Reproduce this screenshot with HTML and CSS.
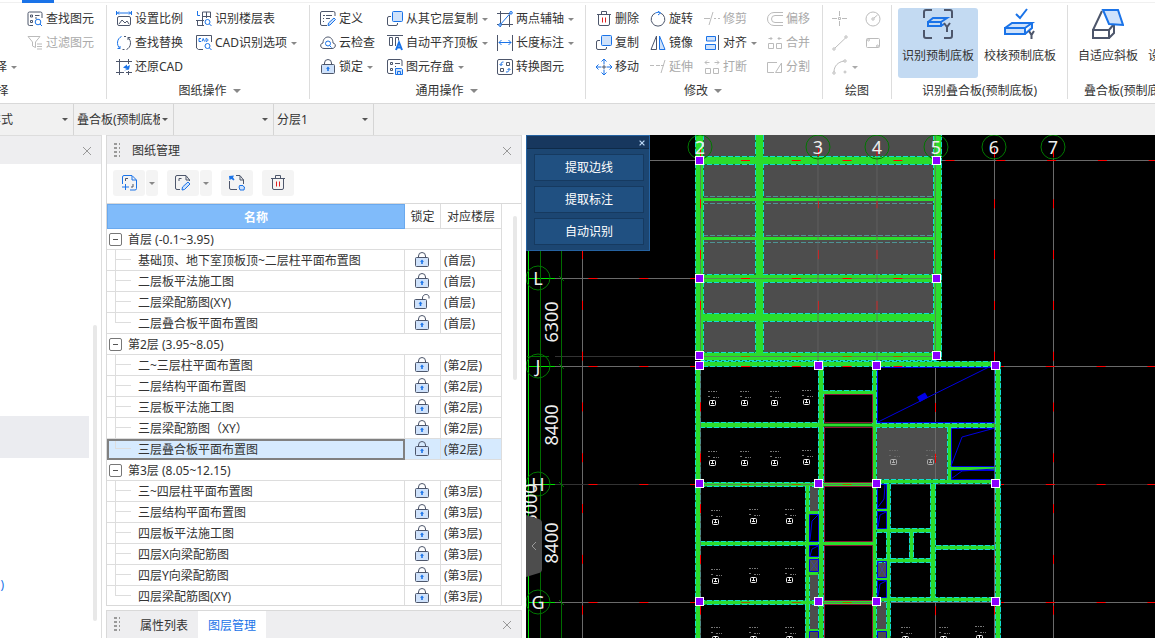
FILE: index.html
```html
<!DOCTYPE html>
<html lang="zh-CN">
<head>
    <meta charset="UTF-8">
    <meta name="viewport" content="width=device-width, initial-scale=1.0">
    <title>图纸管理</title>
    <link rel="stylesheet" href="styles.css">
</head>
<body>
    <!-- icon set -->
    <svg class="sprite" aria-hidden="true">
        <symbol id="i-find" viewBox="0 0 16 16"><path class="d" d="M6 14.500H2.500a1.500 1.500 0 0 1-1.500-1.500V2.500A1.500 1.500 0 0 1 2.500 1h11A1.500 1.500 0 0 1 15 2.500V7M3.500 4h2v2h-2zM3.500 9.500h2v2h-2zM8 4.500h4.500M8 7h2"/><circle class="b" cx="11" cy="11" r="2.800"/><path class="b" d="M13 13l2 2"/></symbol>
        <symbol id="i-filter" viewBox="0 0 16 16"><path class="d" d="M1 1.500h12L8.500 7v5.500l-3-1.500V7zM10 9h5M10 11.500h5M10 14h5"/></symbol>
        <symbol id="i-scale" viewBox="0 0 16 16"><path class="b" d="M.5 0v4M15.500 0v4M1 2h14M3 .5L1.500 2 3 3.500M13 .5L14.500 2 13 3.500"/><rect class="d" x="1.500" y="5.500" width="13" height="9" rx="1.500"/><path class="d" d="M3 13l3-4 3 3 2-2 2 3"/></symbol>
        <symbol id="i-replace" viewBox="0 0 16 16"><path class="b" d="M5.500 1.500C1 3.500 0 10 4 13.500M1.500 13.500H4V11"/><path class="d" d="M6.500 14.500h2M10.500 14.500c4.500-2 5.500-8.500 1.500-12M14.500 2.500H12V5M8 1.500h2"/></symbol>
        <symbol id="i-restore" viewBox="0 0 16 16"><path class="d" d="M0 2.500h16M3.500 0v16M12.500 0v5M0 13.500h8M12.500 12v4M10 13.500h6"/><path class="bf" d="M7 8.500l4-3v2l3-1.500-1 4.500-5 1 3-1.500z"/></symbol>
        <symbol id="i-floors" viewBox="0 0 16 16"><path class="b" d="M1.500 0v4.500H4"/><path class="d" d="M6.500 1h8v6M6.500 1v13.500M6 5.500h9M10.500 1v6M0 9.500h8M1.500 9.500v5H8"/><circle class="b" cx="11.500" cy="11" r="2.500"/><path class="b" d="M13.500 13l2 2"/></symbol>
        <symbol id="i-cadopt" viewBox="0 0 16 16"><path class="d" d="M7 14.500H2.500L.5 13V.5h15V7"/><path class="b" d="M5 3.500H3v3h2M6 6.500l1.200-3 1.300 3M10 3.500v3c2.500 0 2.500-3 0-3"/><circle class="b" cx="11.500" cy="11" r="2.500"/><path class="b" d="M13.500 13l2 2"/></symbol>
        <symbol id="i-define" viewBox="0 0 16 16"><path class="d" d="M7 14.500H2A1.500 1.500 0 0 1 .5 13V2A1.500 1.500 0 0 1 2 .5h11.500A1.500 1.500 0 0 1 15 2v3M3 4.500h2M6 4.500h6M3 7.500h1M6 7.500h4M3 10.500h1"/><path class="bl" d="M8 14.500l.5-2.500L14 7l1.500 1.500L10 14z"/></symbol>
        <symbol id="i-cloud" viewBox="0 0 16 16"><path class="d" d="M4 13.500C0 13.500-.5 8.500 3 8 3 0 13 0 13 8c3.500.5 3 5.500-1 5.500z"/><circle class="b" cx="8" cy="8.500" r="2.500"/><path class="b" d="M9.500 10.500l2 2"/></symbol>
        <symbol id="i-lock" viewBox="0 0 16 16"><path class="d" d="M4.500 6V4a3.500 3.500 0 0 1 7 0v2"/><rect class="dl" x="1.500" y="5.500" width="13" height="9" rx="1"/><path class="bf" d="M8 7.500l2 2.200H8.800V12H7.200V9.700H6z"/></symbol>
        <symbol id="i-unlock" viewBox="0 0 16 16"><path class="d" d="M8.500 6V4c0-4.500 6.500-4.500 6.500-1v1.500"/><rect class="dl" x=".5" y="5.500" width="12" height="9" rx="1"/><path class="bf" d="M6.500 7.500l2 2.200H7.300V12H5.700V9.700H4.500z"/></symbol>
        <symbol id="i-copy" viewBox="0 0 16 16"><path class="d" d="M4 5.500H2A1.500 1.500 0 0 0 .5 7v6A1.500 1.500 0 0 0 2 14.500h7a1.500 1.500 0 0 0 1.500-1.500v-1"/><rect class="bl" x="5.500" y=".5" width="10" height="10" rx="1"/></symbol>
        <symbol id="i-flush" viewBox="0 0 16 16"><path class="d" d="M0 .5h16M2.500 2.500h3v8h-3zM8.500 11V2.500h3v3"/><path class="b thick" d="M9 15l3-7.500L15 15M10 12.500h4"/></symbol>
        <symbol id="i-save" viewBox="0 0 16 16"><path class="d" d="M6.500 14.500H2A1.500 1.500 0 0 1 .5 13V2A1.500 1.500 0 0 1 2 .5h11.500A1.500 1.500 0 0 1 15 2v5M3.500 3.500h2v2h-2zM3.500 9.500h2v2h-2zM8 4.500h5M8 7.500h1"/><path class="bl" d="M8.500 9.500h6l1 1v5h-7zM10.500 15v-2.500h3V15"/></symbol>
        <symbol id="i-axis" viewBox="0 0 16 16"><path class="d" d="M0 2.500h13M3.500 0v16M12.500 4v12M0 13.500h16"/><path class="b" d="M3 14L13.500 2"/><circle class="bl" cx="14" cy="1.800" r="1.300"/><circle class="bl" cx="3" cy="14" r="1.300"/></symbol>
        <symbol id="i-length" viewBox="0 0 16 16"><path class="d" d="M.5 0v16M15.500 0v16"/><path class="b" d="M2 7.500h12M4.500 5L2 7.500 4.500 10M11.500 5L14 7.500 11.500 10"/></symbol>
        <symbol id="i-convert" viewBox="0 0 16 16"><rect class="d" x=".5" y=".5" width="15" height="15" rx="1.500"/><path class="d" d="M9.500 3.500h3v3h-3zM3.500 9.500h3v3h-3z"/><path class="b" d="M6.500 3C4 3 4 4 4 6.500M2.500 5L4 6.500 5.500 5M9 13c3 0 3-1 3-3.500M10.500 11L12 9.500l1.500 1.500"/></symbol>
        <symbol id="i-trash" viewBox="0 0 16 16"><path class="d" d="M1 3.500h14M5.500 3V.5h5V3M2.500 3.500V13A1.500 1.500 0 0 0 4 14.500h8a1.500 1.500 0 0 0 1.500-1.500V3.500"/><path class="r" d="M6.500 6.500v5M9.500 6.500v5"/></symbol>
        <symbol id="i-rotate" viewBox="0 0 16 16"><path class="d" d="M10.500 2A6.800 6.800 0 1 1 5.500 2"/><path class="b" d="M5.500 2c2-1 3.500-.8 5 0M8 0l2.500 2L8 4"/></symbol>
        <symbol id="i-trim" viewBox="0 0 16 16"><path class="d" d="M0 7.500h6M10 7.500h2M14 7.500h2M5 14l4-13"/></symbol>
        <symbol id="i-offset" viewBox="0 0 16 16"><path class="d" d="M16 1.500H7a6.500 6.500 0 0 0 0 13h9M16 4.500H8a3 3 0 0 0 0 7h8"/></symbol>
        <symbol id="i-mirror" viewBox="0 0 16 16"><path class="d" d="M6.500 1v13.500H1z"/><path class="bl" d="M9.500 1v13.500H15z"/></symbol>
        <symbol id="i-align" viewBox="0 0 16 16"><path class="d" d="M14.500 0v15"/><path class="bl" d="M2.500 1.500h9V6h-9zM1.500 9.500h10v5h-10z"/></symbol>
        <symbol id="i-merge" viewBox="0 0 16 16"><path class="d" d="M1.500 8.500h5v5h-5zM9.500 8.500h5v5h-5zM1.500 3.500H5M3.500 2L5 3.500 3.500 5M14.500 3.500H11M12.500 2L11 3.500 12.500 5"/></symbol>
        <symbol id="i-move" viewBox="0 0 16 16"><path class="b" d="M5.500 2.500L8 0l2.500 2.500M5.500 13.500L8 16l2.500-2.500M2.500 5.500L0 8l2.500 2.500M13.500 5.500L16 8l-2.500 2.500M8 .5v5M8 10.500v5M.5 8h5M10.500 8h5"/><path class="d" d="M8 6v4M6 8h4"/></symbol>
        <symbol id="i-extend" viewBox="0 0 16 16"><path class="d" d="M0 6.500h4M6 6.500h4M11 6.500h3M11 14l4-13"/></symbol>
        <symbol id="i-break" viewBox="0 0 16 16"><path class="d" d="M1.500 9.500h5v5h-5zM9.500 9.500h5v5h-5zM5.500 3.500H1M3 1.500l-2 2 2 2M10.500 3.500H15M13 1.500l2 2-2 2"/></symbol>
        <symbol id="i-split" viewBox="0 0 16 16"><path class="d" d="M10 3.500H.5v10H7M14.500 4l-6 9.500h6z"/></symbol>
        <symbol id="i-point" viewBox="0 0 16 16"><path class="d" d="M0 7.500h5M10 7.500h5M7.500 0v5M7.500 10v5M6.500 6.500h2v2h-2z"/></symbol>
        <symbol id="i-circle" viewBox="0 0 16 16"><circle class="d" cx="8" cy="8" r="7"/><circle class="d" cx="8" cy="8" r="1.200"/><path class="d" d="M9 7l3.500-3"/></symbol>
        <symbol id="i-line" viewBox="0 0 16 16"><path class="d" d="M3 13L13.500 3"/><circle class="d" cx="2" cy="14" r="1.200"/><circle class="d" cx="14" cy="2" r="1.200"/></symbol>
        <symbol id="i-rect" viewBox="0 0 16 16"><rect class="d" x="1.500" y="3.500" width="13" height="9" rx="1"/><circle class="d" cx="3.500" cy="5" r="1"/><circle class="d" cx="12.500" cy="11" r="1"/></symbol>
        <symbol id="i-arc" viewBox="0 0 16 16"><path class="d" d="M2 13C2 7 6 3 12 2"/><circle class="d" cx="2" cy="14" r="1.200"/><circle class="d" cx="13" cy="2" r="1.200"/><circle class="d" cx="13" cy="13" r="1"/></symbol>
        <symbol id="i-recog" viewBox="0 0 32 32"><path class="d thick" d="M2 10V4a2 2 0 0 1 2-2h6M22 2h6a2 2 0 0 1 2 2v6M2 22v6a2 2 0 0 0 2 2h6M22 30h6a2 2 0 0 0 2-2v-6"/><path class="b thick" d="M6 14h13v4H6zM6 14l5-4h14l-6 4M19 18l3-2"/><path class="d thick" d="M22 15l3 4 3-4M25 19v5"/></symbol>
        <symbol id="i-check" viewBox="0 0 32 32"><path class="b thick" d="M12 6l4 4 7-9"/><path class="bl thick" d="M1 20h20v6H1zM1 20l7-5h20l-7 5M28 15v5l-7 6"/><path class="d thick" d="M25 23l2.500 4 2.500-4M27.500 27v4"/></symbol>
        <symbol id="i-slope" viewBox="0 0 32 32"><path class="d thick" d="M1 22h16v8H1zM1 22L10 3M17 22l5-6M17 30l5-5v-8"/><path class="bl thick" d="M11 2h15l5 15-14-1z"/></symbol>
        <symbol id="i-newdwg" viewBox="0 0 16 16"><path class="b" d="M1.500 9V2A1.500 1.500 0 0 1 3 .5h8L15.500 5v8.500A1.500 1.500 0 0 1 14 15H9M11 1v4h4M4.500 9v6M1 12h7"/><path class="d" d="M4.500 6V3.500H7M12 9v3h-2"/></symbol>
        <symbol id="i-editdwg" viewBox="0 0 16 16"><path class="d" d="M5 14.500H2A1.500 1.500 0 0 1 .5 13V2A1.500 1.500 0 0 1 2 .5h9L14.500 5v1M11 1v4h4M4 6V3.500h2.500"/><path class="bl" d="M7 15l.5-3L13 7l2 2-5.500 5.500z"/></symbol>
        <symbol id="i-locate" viewBox="0 0 16 16"><path class="d" d="M.5 6v7A1.500 1.500 0 0 0 2 14.500h6M7 .5h4L14.500 5v4M11 1v4h4"/><path class="bf" d="M0 1l5-.5-1 2 1.500 2-1 1-2-1.500-2 1z"/><path class="bl" d="M10 12l1-2 1 1 1-1 1 1 1.500 1-.5 3h-4z"/></symbol>
        <symbol id="i-close" viewBox="0 0 10 10"><path d="M1 1l8 8M9 1L1 9"/></symbol>
    </svg>

    <div class="app">
        <nav class="tabstrip"><span class="tab-mark"></span></nav>

        <div class="ribbon">
            <section class="group g-select">
                <div class="tools">
                    <span></span>
                    <button class="tool"><svg><use href="#i-find"/></svg>查找图元</button>
                    <span></span>
                    <button class="tool" disabled><svg><use href="#i-filter"/></svg>过滤图元</button>
                    <button class="tool cut">择<i class="caret"></i></button>
                </div>
                <div class="title cut">择</div>
            </section>
            <section class="group g-drawing">
                <div class="tools">
                    <button class="tool"><svg><use href="#i-scale"/></svg>设置比例</button>
                    <button class="tool"><svg><use href="#i-floors"/></svg>识别楼层表</button>
                    <button class="tool"><svg><use href="#i-replace"/></svg>查找替换</button>
                    <button class="tool"><svg><use href="#i-cadopt"/></svg>CAD识别选项<i class="caret"></i></button>
                    <button class="tool"><svg><use href="#i-restore"/></svg>还原CAD</button>
                </div>
                <button class="title">图纸操作<i class="caret big"></i></button>
            </section>
            <section class="group g-common">
                <div class="tools">
                    <button class="tool"><svg><use href="#i-define"/></svg>定义</button>
                    <button class="tool"><svg><use href="#i-copy"/></svg>从其它层复制<i class="caret"></i></button>
                    <button class="tool"><svg><use href="#i-axis"/></svg>两点辅轴<i class="caret"></i></button>
                    <button class="tool"><svg><use href="#i-cloud"/></svg>云检查</button>
                    <button class="tool"><svg><use href="#i-flush"/></svg>自动平齐顶板<i class="caret"></i></button>
                    <button class="tool"><svg><use href="#i-length"/></svg>长度标注<i class="caret"></i></button>
                    <button class="tool"><svg><use href="#i-lock"/></svg>锁定<i class="caret"></i></button>
                    <button class="tool"><svg><use href="#i-save"/></svg>图元存盘<i class="caret"></i></button>
                    <button class="tool"><svg><use href="#i-convert"/></svg>转换图元</button>
                </div>
                <button class="title">通用操作<i class="caret big"></i></button>
            </section>
            <section class="group g-modify">
                <div class="tools">
                    <button class="tool"><svg><use href="#i-trash"/></svg>删除</button>
                    <button class="tool"><svg><use href="#i-rotate"/></svg>旋转</button>
                    <button class="tool" disabled><svg><use href="#i-trim"/></svg>修剪</button>
                    <button class="tool" disabled><svg><use href="#i-offset"/></svg>偏移</button>
                    <button class="tool"><svg><use href="#i-copy"/></svg>复制</button>
                    <button class="tool"><svg><use href="#i-mirror"/></svg>镜像</button>
                    <button class="tool"><svg><use href="#i-align"/></svg>对齐<i class="caret"></i></button>
                    <button class="tool" disabled><svg><use href="#i-merge"/></svg>合并</button>
                    <button class="tool"><svg><use href="#i-move"/></svg>移动</button>
                    <button class="tool" disabled><svg><use href="#i-extend"/></svg>延伸</button>
                    <button class="tool" disabled><svg><use href="#i-break"/></svg>打断</button>
                    <button class="tool" disabled><svg><use href="#i-split"/></svg>分割</button>
                </div>
                <button class="title">修改<i class="caret big"></i></button>
            </section>
            <section class="group g-draw">
                <div class="tools">
                    <button class="tool" disabled aria-label="点"><svg><use href="#i-point"/></svg></button>
                    <button class="tool" disabled aria-label="圆"><svg><use href="#i-circle"/></svg></button>
                    <button class="tool" disabled aria-label="直线"><svg><use href="#i-line"/></svg></button>
                    <button class="tool" disabled aria-label="矩形"><svg><use href="#i-rect"/></svg></button>
                    <button class="tool" disabled aria-label="弧"><svg><use href="#i-arc"/></svg><i class="caret"></i></button>
                </div>
                <div class="title">绘图</div>
            </section>
            <section class="group g-recog">
                <div class="big-tools">
                    <button class="big-tool active"><svg><use href="#i-recog"/></svg>识别预制底板</button>
                    <button class="big-tool"><svg><use href="#i-check"/></svg>校核预制底板</button>
                </div>
                <div class="title">识别叠合板(预制底板)</div>
            </section>
            <section class="group g-slab">
                <div class="big-tools">
                    <button class="big-tool"><svg><use href="#i-slope"/></svg>自适应斜板</button>
                    <button class="big-tool next"><svg></svg>设</button>
                </div>
                <div class="title">叠合板(预制底板)</div>
            </section>
        </div>

        <div class="options">
            <label class="combo first"><select aria-label="样式"><option>样式</option></select></label>
            <label class="combo"><select aria-label="构件类型"><option>叠合板(预制底板)</option></select></label>
            <label class="combo"><select aria-label="构件"><option></option></select></label>
            <label class="combo"><select aria-label="分层"><option>分层1</option></select></label>
        </div>

        <main class="workspace">
            <aside class="nav-panel">
                <header class="panel-head"><button class="close" aria-label="关闭"><svg><use href="#i-close"/></svg></button></header>
                <div class="nav-body">
                    <div class="nav-list">
                        <div class="nav-selected"></div>
                        <a href="#" class="nav-link">)</a>
                    </div>
                    <div class="nav-scroll"></div>
                </div>
            </aside>

            <aside class="dock">
                <section class="sheet-panel">
                    <header class="panel-head"><i class="grip"></i><h2>图纸管理</h2><button class="close" aria-label="关闭"><svg><use href="#i-close"/></svg></button></header>
                    <div class="sheet-tools">
                        <button aria-label="添加图纸"><svg><use href="#i-newdwg"/></svg></button><button class="drop" aria-label="更多"><i class="caret"></i></button>
                        <button aria-label="编辑图纸"><svg><use href="#i-editdwg"/></svg></button><button class="drop" aria-label="更多"><i class="caret"></i></button>
                        <button class="single" aria-label="定位图纸"><svg><use href="#i-locate"/></svg></button>
                        <button aria-label="删除图纸"><svg><use href="#i-trash"/></svg></button>
                    </div>
                    <div class="sheet-list">
                        <table>
                            <colgroup><col><col class="c-lock"><col class="c-floor"></colgroup>
                            <thead>
                                <tr><th class="name">名称</th><th>锁定</th><th>对应楼层</th></tr>
                            </thead>
                            <tbody>
                                <tr class="floor"><td colspan="3"><button aria-label="折叠"></button>首层 (-0.1~3.95)</td></tr>
                                <tr><td>基础顶、地下室顶板顶~二层柱平面布置图</td><td><svg><use href="#i-lock"/></svg></td><td>(首层)</td></tr>
                                <tr><td>二层板平法施工图</td><td><svg><use href="#i-lock"/></svg></td><td>(首层)</td></tr>
                                <tr><td>二层梁配筋图(XY)</td><td><svg><use href="#i-unlock"/></svg></td><td>(首层)</td></tr>
                                <tr class="last"><td>二层叠合板平面布置图</td><td><svg><use href="#i-lock"/></svg></td><td>(首层)</td></tr>
                                <tr class="floor"><td colspan="3"><button aria-label="折叠"></button>第2层 (3.95~8.05)</td></tr>
                                <tr><td>二~三层柱平面布置图</td><td><svg><use href="#i-lock"/></svg></td><td>(第2层)</td></tr>
                                <tr><td>二层结构平面布置图</td><td><svg><use href="#i-lock"/></svg></td><td>(第2层)</td></tr>
                                <tr><td>三层板平法施工图</td><td><svg><use href="#i-lock"/></svg></td><td>(第2层)</td></tr>
                                <tr><td>三层梁配筋图（XY）</td><td><svg><use href="#i-lock"/></svg></td><td>(第2层)</td></tr>
                                <tr class="last selected"><td>三层叠合板平面布置图</td><td><svg><use href="#i-lock"/></svg></td><td>(第2层)</td></tr>
                                <tr class="floor"><td colspan="3"><button aria-label="折叠"></button>第3层 (8.05~12.15)</td></tr>
                                <tr><td>三~四层柱平面布置图</td><td><svg><use href="#i-lock"/></svg></td><td>(第3层)</td></tr>
                                <tr><td>三层结构平面布置图</td><td><svg><use href="#i-lock"/></svg></td><td>(第3层)</td></tr>
                                <tr><td>四层板平法施工图</td><td><svg><use href="#i-lock"/></svg></td><td>(第3层)</td></tr>
                                <tr><td>四层X向梁配筋图</td><td><svg><use href="#i-lock"/></svg></td><td>(第3层)</td></tr>
                                <tr><td>四层Y向梁配筋图</td><td><svg><use href="#i-lock"/></svg></td><td>(第3层)</td></tr>
                                <tr class="last"><td>四层梁配筋图(XY)</td><td><svg><use href="#i-lock"/></svg></td><td>(第3层)</td></tr>
                            </tbody>
                        </table>
                        <div class="sheet-scroll"></div>
                    </div>
                </section>
                <footer class="dock-tabs">
                    <i class="grip"></i>
                    <button>属性列表</button>
                    <button class="active">图层管理</button>
                    <button class="close" aria-label="关闭"><svg><use href="#i-close"/></svg></button>
                </footer>
            </aside>

            <section class="canvas">
                <svg class="plan" viewBox="526 135 629 503" preserveAspectRatio="xMinYMin slice">
                    <defs>
                        <path id="w-thick" d="M699.500 135V360M937.500 135V360M759.500 135V356M700 160.500H937M700 278.500H937M700 317.500H937M700 356.500H937"/>
                        <path id="w-mid" d="M698 362V638M696 364H1000M998 362V638M821 364V638M933 484V600M700 425H821"/>
                        <path id="w-thin" d="M874.500 364V638M875 425.500H997M823 392.500H873M700 484.500H874M877 481.500H997M700 543.500H808M700 602.500H874M877 599.500H997M807.500 486V638M949.500 427V481M888.500 484V638M877 530.500H931M877 560.500H931M911.500 531V560M936 547.500H995"/>
                        <g id="mark">
                            <path class="note" d="M-4-11.500h9M-4-6.500h2M1-5.500h6"/>
                            <rect class="tag" x="-2.500" y="-2.500" width="6" height="5" rx="1"/>
                            <path class="tag" d="M-1 .5h3M.5-2v3"/>
                        </g>
                        <rect id="node" x="-4.500" y="-3.500" width="8" height="8"/>
                    </defs>

                    <!-- slabs -->
                    <g class="slab">
                        <path d="M703 135H935V355H703zM877 427H949V480H877zM809 486H818V511H809zM809 559H818V571H809zM809 574H818V629H809zM809 632H818V638H809zM877 561H887V577H877zM877 602H887V629H877zM877 632H887V638H877z"/>
                    </g>
                    <path class="hidden-line" d="M703 196.500H934M703 203.500H934M703 235.500H934M703 242.500H934"/>

                    <!-- axes -->
                    <path class="axis" d="M649 160.500H1155M540 278.500H700M540 366.500H1155M582.500 250V638M994.500 158V638M1053.500 158V638M935.500 366V638M540 602.500H1155"/>
                    <path class="axis dim" d="M555 356.500H700M540 484.500H1155"/>
                    <path class="axis-red" d="M588.500 278.500H697M588.500 366.500H697M588.500 484.500H697M588.500 602.500H697"/>
                    <path class="axis-red" d="M995 366.500H1155M995 484.500H1155M995 602.500H1155M945.500 160.500H1155"/>
                    <path class="axis-red" d="M582.500 250V638M818.500 148.500V350M877 148.500V350M935.500 403V638M994.500 148.500V638M1053.500 148.500V638"/>

                    <!-- walls: dark base, dashed outline, body on top -->
                    <use class="base thick" href="#w-thick"/>
                    <use class="base mid" href="#w-mid"/>
                    <use class="base thin" href="#w-thin"/>
                    <use class="edge thick" href="#w-thick"/>
                    <use class="edge mid" href="#w-mid"/>
                    <use class="edge thin" href="#w-thin"/>
                    <use class="wall thick" href="#w-thick"/>
                    <use class="wall mid" href="#w-mid"/>
                    <use class="wall thin" href="#w-thin"/>
                    <path class="wall thin" d="M703 199.500H934M703 238.500H934M823 425H873M823 543.500H873M808 512.500H818M808 543.500H818M808 557.500H818M808 573.500H818M808 630.500H818M877 509.500H887M877 578.500H887M877 630.500H887M951 468.500H995"/>

                    <!-- openings -->
                    <path class="maroon" d="M824.500 394.500H872.500V422.500H824.500zM824.500 427.500H872.500V482.500H824.500zM824.500 486.500H872.500V541.500H824.500zM824.500 545.500H872.500V600.500H824.500zM824.500 604.500H872.500V640H824.500z"/>
                    <path class="blue" d="M877.500 367.500H994.500V422.500H877.500zM878 422L990 366.500M951.500 428.500H994.500V466.500H951.500zM951 466L962 437 995 428M951.500 470.500H994.500V479.500H951.500zM951 479L962 471 995 469"/>
                    <path class="blue" d="M809.500 514.500H818.500V541.500H809.500zM810 540L812 521 818 515M809.500 545.500H818.500V556.500H809.500zM810 556L812 549 818 546M809.500 559.500H818.500V571.500H809.500zM877.500 484.500H886.500V508.500H877.500zM878 507L884 499 885 485M877.500 511.500H886.500V528.500H877.500zM878 527L880 515 886 512M877.500 561.500H886.500V577.500H877.500zM877.500 580.500H886.500V597.500H877.500zM878 596L880 584 886 581M809.500 638V631.500H818.500V638M877.500 638V631.500H886.500V638"/>
                    <path class="blue soft" d="M810 560L818 571M818 560L810 571M878 562L886 577M886 562L878 577"/>
                    <path class="blue-fill" d="M917 397l8-4.500 3 5-8 4.500z"/>

                    <path class="overlay" d="M700.500 160V638M935.500 135V356M818 156V360M877 156V360M700 278.500H935M700 356.500H935M700 484.500H874M823 602.500H874M994.500 366V600"/>
                    <path class="axis-red" d="M700.500 148.500V638M741 160.500H935M741 278.500H935M741 366.500H935"/>
                    <path class="axis-red dim" d="M741 356.500H935M741 484.500H870M741 602.500H870"/>

                    <!-- slab marks -->
                    <g>
                        <use href="#mark" x="712" y="403"/><use href="#mark" x="744" y="403"/><use href="#mark" x="774" y="403"/><use href="#mark" x="806" y="402"/>
                        <use href="#mark" x="712" y="463"/><use href="#mark" x="744" y="463"/><use href="#mark" x="774" y="463"/><use href="#mark" x="806" y="462"/>
                        <use href="#mark" x="715" y="522"/><use href="#mark" x="753" y="521"/><use href="#mark" x="789" y="521"/>
                        <use href="#mark" x="715" y="581"/><use href="#mark" x="753" y="580"/><use href="#mark" x="789" y="580"/>
                        <use href="#mark" x="715" y="639"/><use href="#mark" x="753" y="639"/><use href="#mark" x="789" y="639"/>
                        <use href="#mark" x="905" y="639"/><use href="#mark" x="943" y="639"/><use href="#mark" x="979" y="638"/>
                    </g>
                    <g class="faded"><use href="#mark" x="893" y="462"/><use href="#mark" x="930" y="462"/></g>

                    <!-- axis heads -->
                    <path class="dim-bright" d="M528.500 250V638M528 278.500H555M528 366.500H555M528 484.500H555M528 602.500H555"/>
                    <path class="dim-line" d="M540.500 250V638M561.500 250V638M559 276l5 5M559 364l5 5M559 482l5 5M559 600l5 5M527 356.500H549"/>
                    <g class="bubble">
                        <circle cx="700" cy="147" r="12"/><circle cx="818" cy="147" r="12"/><circle cx="877" cy="147" r="12"/><circle cx="936" cy="147" r="12"/><circle cx="994" cy="147" r="12"/><circle cx="1053" cy="147" r="12"/>
                        <circle cx="538" cy="278" r="12"/><circle cx="538" cy="366" r="12"/><circle cx="538" cy="484" r="12"/><circle cx="538" cy="602" r="12"/>
                    </g>
                    <g class="axis-text">
                        <text x="700" y="154">2</text><text x="818" y="154">3</text><text x="877" y="154">4</text><text x="936" y="154">5</text><text x="994" y="154">6</text><text x="1053" y="154">7</text>
                        <text x="538" y="285">L</text><text x="538" y="373">J</text><text x="538" y="491">H</text><text x="538" y="609">G</text>
                        <text transform="translate(558 322) rotate(-90)">6300</text>
                        <text transform="translate(558 425) rotate(-90)">8400</text>
                        <text transform="translate(558 543) rotate(-90)">8400</text>
                        <text transform="translate(537 504) rotate(-90)">5000</text>
                    </g>

                    <!-- grips -->
                    <g class="grips">
                        <use href="#node" x="700" y="160"/><use href="#node" x="937" y="160"/><use href="#node" x="700" y="278"/><use href="#node" x="937" y="278"/><use href="#node" x="700" y="355"/><use href="#node" x="937" y="355"/>
                        <use href="#node" x="700" y="365"/><use href="#node" x="819" y="365"/><use href="#node" x="877" y="365"/><use href="#node" x="996" y="365"/>
                        <use href="#node" x="700" y="483"/><use href="#node" x="819" y="483"/><use href="#node" x="877" y="483"/><use href="#node" x="996" y="483"/>
                        <use href="#node" x="700" y="601"/><use href="#node" x="819" y="601"/><use href="#node" x="877" y="601"/><use href="#node" x="996" y="601"/>
                    </g>

                    <path class="handle" d="M526 515l13 4q3 1 3 4v46q0 3-3 4l-13 4z"/>
                    <path class="handle-arrow" d="M536 542l-4 4 4 4"/>
                </svg>

                <div class="float-panel">
                    <header><button aria-label="关闭"><svg><use href="#i-close"/></svg></button></header>
                    <button>提取边线</button>
                    <button>提取标注</button>
                    <button>自动识别</button>
                </div>
            </section>
        </main>
    </div>
</body>
</html>
```
FILE: styles.css
```css
* {
    box-sizing: border-box;
}
body {
    margin: 0;
    font-family: "Noto Sans", "Noto Sans CJK SC", sans-serif;
    font-size: 12px;
    line-height: 16px;
    color: #333;
    background: #fff;
}
button {
    font: inherit;
    color: inherit;
    background: none;
    border: none;
    padding: 0;
    white-space: nowrap;
}
.sprite {
    position: absolute;
    width: 0;
    height: 0;
}
.app {
    display: flex;
    flex-direction: column;
    height: 100vh;
    overflow: hidden;
}

/* icon strokes */
.d, .b, .r, .bl, .dl {
    fill: none;
    stroke: #4d566b;
}
.b, .bl {
    stroke: #1a73e8;
}
.r {
    stroke: #e02020;
}
.bl, .dl {
    fill: #cfe2fb;
}
.bf {
    fill: #1a73e8;
}
.d.thick, .b.thick, .bl.thick {
    stroke-width: 2;
}
.caret {
    border: 3px solid transparent;
    border-top-color: #888;
    border-bottom: none;
    margin-left: 1px;
}
.caret.big {
    border-width: 4px;
    border-bottom: none;
    margin-left: 6px;
}

/* ribbon */
.tabstrip {
    height: 3px;
    flex: none;
    border-bottom: 1px solid #f0f0f0;
    padding-left: 22px;
}
.tab-mark {
    display: block;
    width: 32px;
    height: 3px;
    background: #1a73e8;
}
.ribbon {
    display: flex;
    flex: none;
    height: 101px;
    overflow: hidden;
    border-bottom: 1px solid #d9d9d9;
}
.group {
    flex: none;
    display: flex;
    flex-direction: column;
    margin: 2px 0 4px;
    padding-top: 2px;
    border-right: 1px solid #ddd;
}
.tools {
    display: grid;
    grid-auto-rows: 24px;
    height: 76px;
}
.tool {
    display: flex;
    align-items: center;
    gap: 3px;
}
.tool svg {
    width: 16px;
    height: 16px;
    flex: none;
}
.tool:disabled {
    color: #aaa;
}
.tool:disabled .caret {
    border-top-color: #aaa;
}
.tool:disabled svg {
    filter: grayscale(1) opacity(.4);
}
.cut {
    justify-content: flex-end;
}
.title {
    display: flex;
    align-items: center;
    justify-content: center;
    height: 16px;
}
button.title {
    padding-right: 6px;
}
.title.cut {
    width: 5px;
    white-space: nowrap;
}
.g-select {
    width: 107px;
}
.g-select .tools {
    grid-template-columns: 17px 1fr;
}
.g-select .tool:not(.cut) {
    padding-left: 10px;
}
.g-drawing {
    width: 203px;
    padding-left: 9px;
}
.g-drawing .tools {
    grid-template-columns: 80px 1fr;
}
.g-common {
    width: 276px;
    padding-left: 10px;
}
.g-common .tools {
    grid-template-columns: 67px 110px 1fr;
}
.g-common .title {
    padding-right: 12px;
}
.g-modify {
    width: 237px;
    padding-left: 10px;
}
.g-modify .tools {
    grid-template-columns: 54px 54px 63px 1fr;
}
.g-modify .title {
    padding-right: 12px;
}
.g-draw {
    width: 69px;
}
.g-draw .tools {
    grid-template-columns: 33px 1fr;
    padding-left: 9px;
}
.g-recog {
    width: 176px;
}
.big-tools {
    display: flex;
    height: 76px;
    padding: 1px 0 5px 6px;
}
.big-tool {
    display: flex;
    flex-direction: column;
    align-items: center;
    width: 84px;
    border-radius: 3px;
}
.big-tool svg {
    width: 32px;
    height: 32px;
    flex: none;
    margin-bottom: 8px;
}
.big-tool.active {
    width: 80px;
    background: #c3daf2;
}
.g-slab .big-tool {
    width: 60px;
    margin-left: 4px;
}
.g-slab .big-tool.next {
    align-items: flex-start;
    margin-left: 10px;
}
.g-slab .title {
    justify-content: flex-start;
    padding-left: 16px;
}

/* component selectors */
.options {
    display: flex;
    flex: none;
    height: 31px;
    background: #f1f1f1;
}
.combo {
    display: flex;
    align-items: center;
    width: 100px;
    border-right: 1px solid #d5d5d5;
    padding: 0 5px 0 3px;
}
.combo::after {
    content: "";
    border: 3px solid transparent;
    border-top-color: #555;
    border-bottom: none;
}
.combo select {
    appearance: none;
    flex: 1;
    min-width: 0;
    overflow: hidden;
    border: none;
    padding: 0;
    margin: 0 2px 0 0;
    background: none;
    font: inherit;
    color: inherit;
}
.combo.first {
    width: 74px;
    overflow: hidden;
    padding-left: 0;
}
.combo.first select {
    margin-left: -11px;
}

/* panels */
.workspace {
    display: flex;
    flex: 1;
    min-height: 0;
}
.panel-head {
    display: flex;
    align-items: center;
    flex: none;
    height: 29px;
    padding-top: 1px;
    background: #eeeef0;
    border-top: 1px solid #ddd;
}
.panel-head h2 {
    margin: 0 0 0 12px;
    font-size: 12px;
    font-weight: normal;
}
.close {
    margin-left: auto;
    padding: 0 9px;
    line-height: 0;
}
.close svg {
    width: 10px;
    height: 10px;
    stroke: #999;
}
.grip {
    width: 8px;
    height: 16px;
    margin-left: 5px;
    background: conic-gradient(from 90deg at 2px 2px, transparent 75%, #999 0) 0 0 / 5px 4px;
}
.nav-panel {
    display: flex;
    flex-direction: column;
    flex: none;
    width: 102px;
    border-right: 1px solid #ddd;
}
.nav-body {
    display: flex;
    flex: 1;
    justify-content: space-between;
}
.nav-list {
    width: 89px;
    padding-top: 252px;
}
.nav-selected {
    height: 42px;
    background: #ebecf0;
}
.nav-link {
    display: flex;
    justify-content: flex-end;
    width: 4px;
    margin-top: 119px;
    color: #1a73e8;
    text-decoration: none;
}
.nav-scroll {
    width: 4px;
    margin: 161px 4px 17px 0;
    border-radius: 2px;
    background: #e8e8e8;
}
.dock {
    display: flex;
    flex-direction: column;
    flex: none;
    width: 416px;
    margin: 0 4px;
}
.sheet-panel {
    display: flex;
    flex-direction: column;
    flex: 1;
    min-height: 0;
    border: 1px solid #d9d9d9;
    border-top: none;
}
.sheet-tools {
    display: flex;
    flex: none;
    height: 39px;
    padding: 6px 6px 7px;
}
.sheet-tools button {
    width: 32px;
    height: 26px;
    border-radius: 3px;
    background: #f4f4f4;
    line-height: 0;
}
.sheet-tools .drop {
    width: 12px;
    margin: 0 9px 0 1px;
}
.sheet-tools .drop .caret {
    display: inline-block;
    margin: 0;
}
.sheet-tools .single {
    margin-right: 9px;
}
.sheet-tools svg {
    width: 16px;
    height: 16px;
}
.sheet-list {
    display: flex;
    flex: 1;
    min-height: 0;
    overflow: hidden;
    border-top: 1px solid #d9d9d9;
}
table {
    width: 395px;
    height: 0;
    table-layout: fixed;
    border-collapse: separate;
    border-spacing: 0;
}
.c-lock {
    width: 36px;
}
.c-floor {
    width: 61px;
}
th, td {
    padding: 2px 0 0;
    border-right: 1px solid #ddd;
    border-bottom: 1px solid #ddd;
    white-space: nowrap;
}
th {
    height: 25px;
    font-weight: normal;
}
th.name {
    font-weight: bold;
    color: #fff;
    background: #80bbfa;
    border: 1px solid #6aa9ee;
}
td {
    height: 21px;
}
td:first-child {
    padding-left: 31px;
    background: linear-gradient(#ddd, #ddd) 8px 0 / 1px 100% no-repeat, linear-gradient(#ddd, #ddd) 8px 9px / 16px 1px no-repeat;
}
.last td:first-child {
    background-size: 1px 10px, 16px 1px;
}
td:nth-child(2) {
    padding: 0 1px 0 0;
    text-align: center;
    line-height: 0;
}
td:nth-child(3) {
    padding-left: 3px;
}
td svg {
    width: 16px;
    height: 16px;
}
.floor td:first-child {
    padding-left: 2px;
    background: none;
}
.floor button {
    width: 13px;
    height: 13px;
    margin-right: 6px;
    vertical-align: -1px;
    border: 1px solid #777;
    border-radius: 2px;
    background: linear-gradient(#555, #555) center / 5px 1px no-repeat;
}
.selected td {
    background-color: #d6eafe;
}
.selected td:first-child {
    background-color: #d6eafe;
    outline: 2px solid #808080;
    outline-offset: -2px;
}
.sheet-scroll {
    width: 4px;
    height: 164px;
    margin: 12px 0 0 11px;
    border-radius: 2px;
    background: #e8e8e8;
}
.dock-tabs {
    display: flex;
    align-items: center;
    flex: none;
    height: 28px;
    margin-top: 4px;
    background: #eeeef0;
    border: 1px solid #d9d9d9;
    border-bottom: none;
}
.dock-tabs button:not(.close) {
    width: 68px;
    height: 27px;
    padding-top: 3px;
}
.dock-tabs .grip + button {
    margin-left: 10px;
}
.dock-tabs .active {
    color: #1a73e8;
    background: #fff;
}

/* drawing area */
.canvas {
    position: relative;
    flex: 1;
    min-width: 0;
    background: #000;
    overflow: hidden;
}
.plan {
    display: block;
    width: 100%;
    height: 100%;
}
.plan path, .base, .edge, .wall {
    fill: none;
}
.plan .slab path {
    fill: #4d4d4d;
}
.hidden-line {
    stroke: #4f9494;
    stroke-dasharray: 5 2;
}
.axis {
    stroke: #6a6a6a;
}
.axis.dim {
    stroke: #333;
}
.axis-red {
    stroke: #f00;
    stroke-dasharray: 9 41.8;
}
.axis-red.dim {
    stroke: #a06000;
}
.blue {
    stroke: #0000e0;
}
.blue.soft {
    stroke: #4040a0;
}
.plan .blue-fill {
    fill: #0000e8;
}
.maroon {
    stroke: #8a1538;
}
.base {
    stroke: #0f7a34;
}
.edge {
    stroke: #12dcd0;
    stroke-dasharray: 5 2;
}
.wall {
    stroke: #2bdd2b;
}
.base.thick, .edge.thick {
    stroke-width: 9;
}
.base.mid, .edge.mid {
    stroke-width: 6;
}
.base.thin, .edge.thin {
    stroke-width: 5;
}
.wall.thick {
    stroke-width: 7;
}
.wall.mid {
    stroke-width: 4;
}
.wall.thin {
    stroke-width: 3;
}
.overlay {
    stroke: #666;
    opacity: .7;
}
.note {
    stroke: #777;
    stroke-dasharray: 2 1 1 1;
}
.tag {
    fill: none;
    stroke: #eee;
}
.faded {
    opacity: .6;
}
.dim-bright {
    stroke: #00e400;
}
.dim-line {
    stroke: #006c00;
}
.bubble {
    fill: none;
    stroke: #007800;
}
.axis-text {
    fill: #eee;
    font-size: 18px;
    text-anchor: middle;
}
.grips {
    fill: #8a00ff;
    stroke: #fff;
}
.plan .handle {
    fill: #4d4d4d;
}
.handle-arrow {
    stroke: #999;
}
.float-panel {
    position: absolute;
    top: 0;
    left: 0;
    width: 124px;
    height: 116px;
    display: flex;
    flex-direction: column;
    gap: 5px;
    background: #1c4672;
    border: 1px solid #2562a0;
    color: #fff;
}
.float-panel header {
    height: 13px;
    text-align: right;
    line-height: 0;
    background: #17375e;
    border-bottom: 1px solid #0e2a48;
}
.float-panel header button {
    padding: 4px;
}
.float-panel header svg {
    width: 6px;
    height: 6px;
    stroke: #bcd8f5;
    stroke-width: 2;
}
.float-panel > button {
    height: 27px;
    margin: 0 5px 0 7px;
    background: #205081;
    border: 1px solid #163a60;
}
```
